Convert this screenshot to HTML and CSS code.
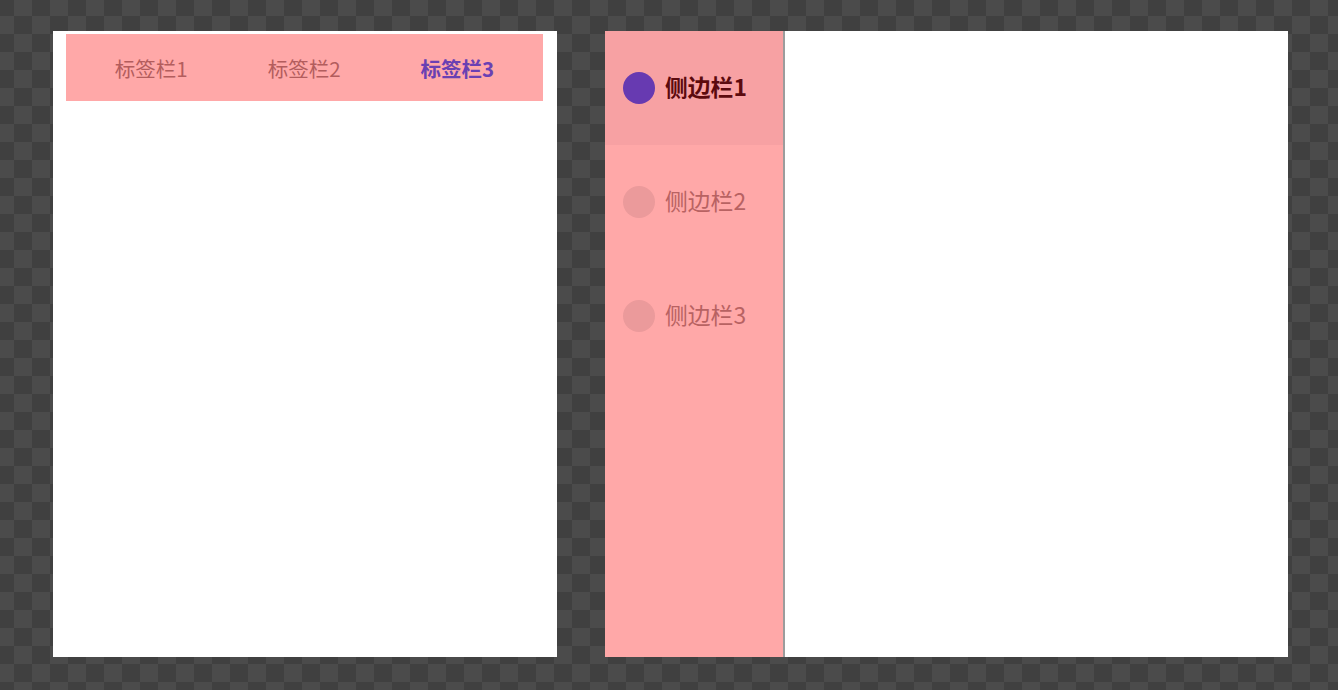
FILE: index.html
```html
<!DOCTYPE html>
<html lang="zh">
<head>
<meta charset="utf-8">
<title>Tabs and Sidebar</title>
<link rel="stylesheet" href="styles.css">
</head>
<body>
<div class="stage">
  <div class="panel tabs-panel">
    <div class="tabbar">
      <div class="tab">标签栏1</div>
      <div class="tab">标签栏2</div>
      <div class="tab active">标签栏3</div>
    </div>
  </div>
  <div class="panel side-panel">
    <div class="sidebar">
      <div class="side-item active"><span class="dot"></span><span class="label">侧边栏1</span></div>
      <div class="side-item"><span class="dot"></span><span class="label">侧边栏2</span></div>
      <div class="side-item"><span class="dot"></span><span class="label">侧边栏3</span></div>
    </div>
    <div class="content"></div>
  </div>
</div>
</body>
</html>
```

FILE: styles.css
```css
html, body {
  margin: 0;
  padding: 0;
  width: 1338px;
  height: 690px;
  overflow: hidden;
}
body {
  font-family: "Noto Sans CJK SC", "Noto Sans", sans-serif;
  background-color: #404040;
  background-image:
    linear-gradient(45deg, #4b4b4b 25%, transparent 25%, transparent 75%, #4b4b4b 75%),
    linear-gradient(45deg, #4b4b4b 25%, transparent 25%, transparent 75%, #4b4b4b 75%);
  background-size: 36px 36px;
  background-position: 14px 16px, 32px 34px;
}
.stage {
  display: flex;
  gap: 48px;
  padding: 31px 0 0 53px;
}
.panel {
  height: 626px;
  background: #fff;
}
.tabs-panel {
  width: 504px;
  box-sizing: border-box;
  padding: 3px 14px 0 13px;
}
.tabbar {
  height: 67px;
  background: #ffa8a8;
  display: flex;
  align-items: center;
  justify-content: center;
  gap: 80px;
}
.tab {
  font-size: 20.5px;
  color: #b35d5d;
  line-height: 1;
  padding-top: 1px;
}
.tab.active {
  color: #6a40b3;
  font-weight: 700;
}
.side-panel {
  width: 683px;
  display: flex;
}
.sidebar {
  width: 178px;
  background: #ffa8a8;
  border-right: 2px solid #9c9c9c;
  display: flex;
  flex-direction: column;
}
.side-item {
  height: 114px;
  display: flex;
  align-items: center;
  padding-left: 18px;
  gap: 10px;
}
.side-item.active {
  background: #f7a1a3;
}
.dot {
  width: 32px;
  height: 32px;
  border-radius: 50%;
  background: #eb9a9b;
}
.side-item.active .dot {
  background: #673ab1;
}
.label {
  font-size: 22.8px;
  color: #b86262;
  line-height: 1;
  margin-top: -1px;
}
.side-item.active .label {
  color: #5c0a0e;
  font-weight: 700;
}
.content {
  flex: 1;
  background: #fff;
}
```
